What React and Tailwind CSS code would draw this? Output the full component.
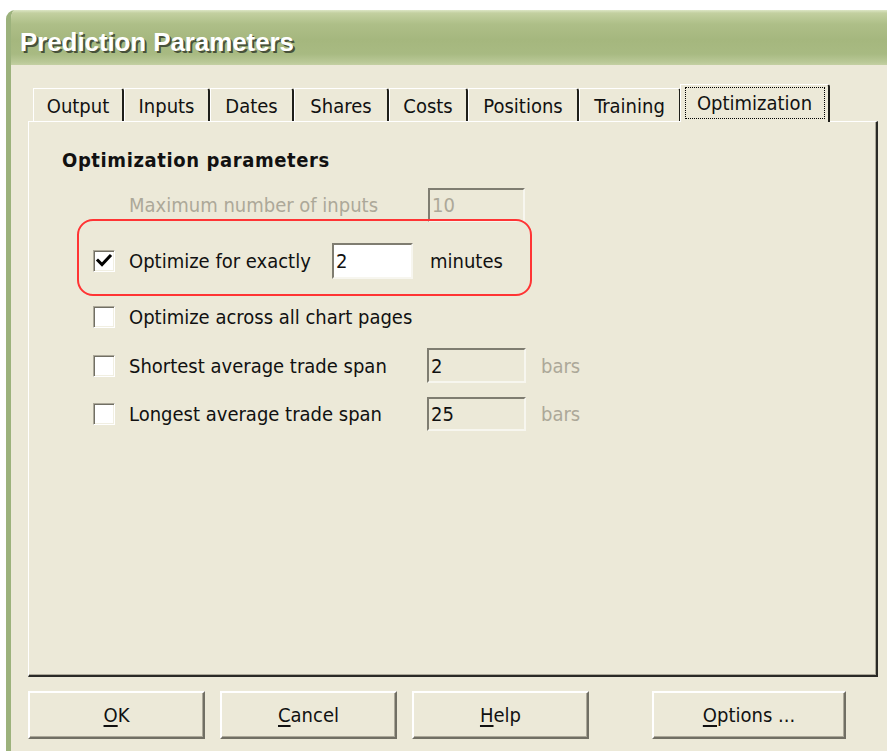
import React from "react";

const ui = "font-['DejaVu_Sans_Condensed','DejaVu_Sans','Liberation_Sans',sans-serif]";

const tabs = [
  ["Output", 91],
  ["Inputs", 86],
  ["Dates", 84],
  ["Shares", 95],
  ["Costs", 79],
  ["Positions", 111],
  ["Training", 102],
];

function Tab({ label, width }) {
  return (
    <div
      className="flex h-[33px] items-center justify-center rounded-tr-[3px] border-t border-l border-r-2 border-t-white border-l-white border-r-[#1e1e1a] pt-[2px] text-[20px] text-[#111]"
      style={{ width }}
    >
      {label}
    </div>
  );
}

function ActiveTab({ label }) {
  return (
    <div className="relative z-10 -mb-px ml-[-1px] flex h-[38px] w-[150px] items-start justify-center rounded-tr-[3px] border-t border-l border-r-2 border-t-white border-l-white border-r-[#1e1e1a] bg-[#ece9d8] pt-[2px]">
      <span className="mx-[1px] flex h-[32px] w-[140px] items-center justify-center border border-dotted border-black text-[20px] text-[#111]">
        {label}
      </span>
    </div>
  );
}

function CheckBox({ checked }) {
  return (
    <div className="flex h-[22px] w-[22px] shrink-0 items-center justify-center border border-t-[#aca899] border-l-[#aca899] border-r-white border-b-white bg-white shadow-[inset_1px_1px_0_#716f64,inset_-1px_-1px_0_#f1efe2]">
      {checked && (
        <svg width="18" height="18" viewBox="0 0 18 18">
          <path d="M3 8.5 L7 12.5 L15 4" fill="none" stroke="#000" strokeWidth="3" strokeLinecap="square" />
        </svg>
      )}
    </div>
  );
}

function Field({ value, width, height, enabled, dim }) {
  return (
    <div
      className={`flex shrink-0 items-center border-2 border-t-[#7f7d71] border-l-[#7f7d71] border-r-[#f7f6ef] border-b-[#f7f6ef] pl-[2px] text-[20px] ${
        enabled ? "bg-white" : "bg-[#ece9d8]"
      } ${dim ? "text-[#aca899]" : "text-[#111]"}`}
      style={{ width, height }}
    >
      {value}
    </div>
  );
}

function Button({ accel, rest, width }) {
  return (
    <div
      className="flex h-[48px] items-center justify-center border-2 border-t-white border-l-white border-r-[#716f64] border-b-[#716f64] bg-[#ece9d8] text-[20px] text-[#111] shadow-[inset_-1px_-1px_0_#aca899]"
      style={{ width }}
    >
      <span>
        <span className="underline underline-offset-[3px]">{accel}</span>
        {rest}
      </span>
    </div>
  );
}

export default function App() {
  return (
    <div className={`flex h-[751px] w-[887px] flex-col bg-white pl-[6px] pt-[10px] ${ui}`}>
      <div className="flex flex-1 flex-col overflow-hidden rounded-tl-[9px] border-l-[5px] border-l-[#9cb27c] bg-[#ece9d8]">
        {/* caption bar */}
        <div className="h-[55px] shrink-0 bg-[linear-gradient(to_bottom,#dde6c6_0px,#c3d0a0_3px,#aebf88_14px,#a5b77e_30px,#a8ba82_44px,#b9c896_52px,#c4d0a3_55px)] pl-[9px] pt-[19px]">
          <div className="font-['Liberation_Sans',sans-serif] text-[26px] leading-none font-bold tracking-[-0.1px] text-white [text-shadow:2px_2px_0_#47513a]">
            Prediction Parameters
          </div>
        </div>

        <div className="flex flex-1 flex-col pl-[17px] pt-[19px]">
          {/* tab strip */}
          <div className="flex h-[37px] items-end pl-[5px]">
            {tabs.map(([label, w]) => (
              <Tab key={label} label={label} width={w} />
            ))}
            <ActiveTab label="Optimization" />
          </div>

          {/* tab page */}
          <div className="flex h-[556px] w-[850px] flex-col border-t border-l border-r-2 border-b-2 border-t-white border-l-white border-r-[#2a2a26] border-b-[#2a2a26] shadow-[inset_-1px_-1px_0_#aca899] text-[20px] text-[#111]">
            <div className="mt-[26px] flex h-[24px] items-center pl-[33px] font-bold tracking-[0.6px]">
              Optimization parameters
            </div>

            <div className="mt-[16px] flex h-[34px] items-center pl-[100px]">
              <span className="w-[299px] text-[#aca899]">Maximum number of inputs</span>
              <Field value="10" width={97} height={34} dim />
            </div>

            <div className="relative mt-[21px] flex h-[36px] items-center pl-[64px]">
              <CheckBox checked />
              <span className="ml-[14px] w-[203px]">Optimize for exactly</span>
              <Field value="2" width={81} height={36} enabled />
              <span className="ml-[17px]">minutes</span>
              <div className="pointer-events-none absolute left-[48px] top-[-24px] h-[77px] w-[455px] rounded-[16px] border-2 border-[#ff3434]" />
            </div>

            <div className="mt-[26px] flex h-[24px] items-center pl-[64px]">
              <CheckBox />
              <span className="ml-[14px]">Optimize across all chart pages</span>
            </div>

            <div className="mt-[19px] flex h-[35px] items-center pl-[64px]">
              <CheckBox />
              <span className="ml-[14px] w-[298px]">Shortest average trade span</span>
              <Field value="2" width={99} height={35} />
              <span className="ml-[15px] text-[#aca899]">bars</span>
            </div>

            <div className="mt-[14px] flex h-[34px] items-center pl-[64px]">
              <CheckBox />
              <span className="ml-[14px] w-[298px]">Longest average trade span</span>
              <Field value="25" width={99} height={34} />
              <span className="ml-[15px] text-[#aca899]">bars</span>
            </div>
          </div>

          {/* dialog buttons */}
          <div className="mt-[14px] flex">
            <Button accel="O" rest="K" width={177} />
            <div className="ml-[15px]">
              <Button accel="C" rest="ancel" width={177} />
            </div>
            <div className="ml-[15px]">
              <Button accel="H" rest="elp" width={177} />
            </div>
            <div className="ml-[63px]">
              <Button accel="O" rest="ptions ..." width={194} />
            </div>
          </div>
        </div>
      </div>
    </div>
  );
}
